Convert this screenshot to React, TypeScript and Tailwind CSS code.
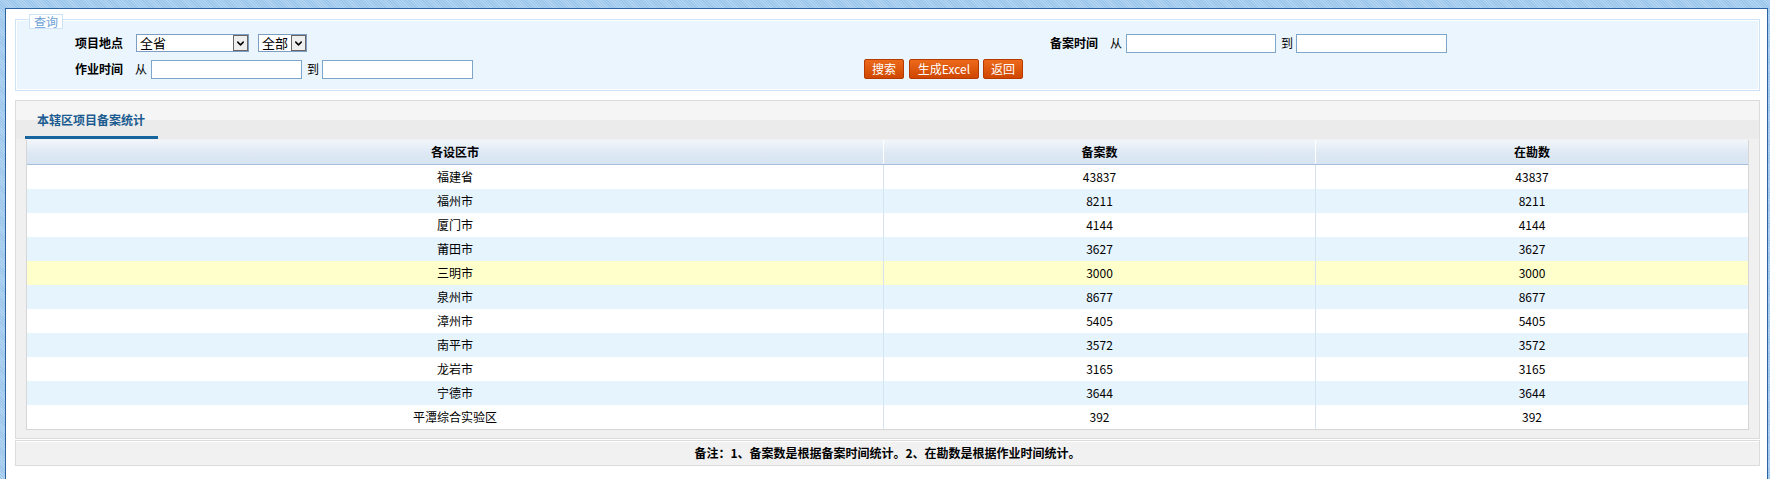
import React from 'react';
import { ChevronDown } from 'lucide-react';

const rows = [
  { city: '福建省', filed: 43837, active: 43837 },
  { city: '福州市', filed: 8211, active: 8211 },
  { city: '厦门市', filed: 4144, active: 4144 },
  { city: '莆田市', filed: 3627, active: 3627 },
  { city: '三明市', filed: 3000, active: 3000, hover: true },
  { city: '泉州市', filed: 8677, active: 8677 },
  { city: '漳州市', filed: 5405, active: 5405 },
  { city: '南平市', filed: 3572, active: 3572 },
  { city: '龙岩市', filed: 3165, active: 3165 },
  { city: '宁德市', filed: 3644, active: 3644 },
  { city: '平潭综合实验区', filed: 392, active: 392 },
];

const FakeSelect: React.FC<{ value: string; className: string }> = ({ value, className }) => (
  <div className={`flex h-[18px] border border-[#7d9ec2] bg-white ${className}`}>
    <span className="flex-1 pl-[3px] text-[13px] leading-[16px] text-black">{value}</span>
    <span className="w-[15px] h-full bg-[#eeeeee] border border-[#666] flex items-center justify-center">
      <ChevronDown size={11} strokeWidth={3.2} className="text-black" />
    </span>
  </div>
);

const TextBox: React.FC<{ className: string }> = ({ className }) => (
  <input type="text" className={`h-[19px] border border-[#7ea6ca] bg-white outline-none ${className}`} />
);

const OrangeButton: React.FC<{ label: string; className: string }> = ({ label, className }) => (
  <button className={`h-[20px] rounded-[2px] border border-[#b63a00] bg-[linear-gradient(to_bottom,#ec6a1c,#cf4600)] text-white text-[12px] leading-[18px] ${className}`}>
    {label}
  </button>
);

export default function App() {
  return (
    <div className="h-[479px] w-full flex flex-col pt-[8px] pl-[5px] pr-[2px] bg-[repeating-linear-gradient(45deg,#b0d3f1_0px,#b0d3f1_1px,#9cc6ea_1px,#9cc6ea_2px)] font-['Noto_Sans_CJK_SC',sans-serif] text-[12px] text-black overflow-hidden">
      <div className="flex-1 bg-white border-t border-l border-r border-[#2c63a0] flex flex-col">
        {/* 查询 */}
        <div className="relative mt-[10px] ml-[9px] mr-[7px] h-[72px] border border-[#cce3f8] bg-[#eaf5fe] shadow-[inset_0_0_0_1px_#ffffff]">
          <span className="absolute left-[13px] top-[-6px] h-[15px] px-[4px] bg-white border border-[#cce3f8] text-[#6b9fd4] leading-[13px]">
            查询
          </span>
          <div className="grid grid-cols-[117px_727px_250px_1fr] grid-rows-[26px_26px] pt-[10px]">
            <div className="flex items-center justify-end pr-[10px] font-bold">项目地点</div>
            <div className="flex items-center pl-[3px]">
              <FakeSelect value="全省" className="w-[113px]" />
              <FakeSelect value="全部" className="w-[49px] ml-[9px]" />
            </div>
            <div className="flex items-center justify-end pr-[12px] font-bold">备案时间</div>
            <div className="flex items-center">
              <span>从</span>
              <TextBox className="w-[150px] ml-[4px]" />
              <span className="ml-[5px]">到</span>
              <TextBox className="w-[151px] ml-[3px]" />
            </div>

            <div className="flex items-center justify-end pr-[10px] font-bold">作业时间</div>
            <div className="flex items-center pl-[2px]">
              <span>从</span>
              <TextBox className="w-[151px] ml-[4px]" />
              <span className="ml-[5px]">到</span>
              <TextBox className="w-[151px] ml-[3px]" />
            </div>
            <div className="flex items-center pl-[4px]">
              <OrangeButton label="搜索" className="w-[40px]" />
              <OrangeButton label="生成Excel" className="w-[70px] ml-[5px]" />
              <OrangeButton label="返回" className="w-[40px] ml-[4px]" />
            </div>
            <div />
          </div>
        </div>

        {/* 统计表 */}
        <div className="mt-[9px] ml-[9px] mr-[7px] border border-[#dcdcdc] bg-[#f0f0f0]">
          <div className="h-[38px] bg-[linear-gradient(to_bottom,#f5f5f5_50%,#ebebeb_50%)] flex">
            <div className="ml-[9px] w-[133px] h-full border-b-[3px] border-[#17659f] pl-[12px] pt-[2px] flex items-center font-bold text-[#1b5b90]">
              本辖区项目备案统计
            </div>
          </div>
          <div className="mx-[10px] mt-[1px] mb-[8px] border-l border-r border-b border-[#d6d6d6] bg-white">
            <div className="grid grid-cols-[856px_432px_1fr] h-[25px] border-b border-[#a3bfdc] bg-[linear-gradient(to_bottom,#f2f6fb,#dfe9f5_50%,#d8e4f2)] font-bold">
              <div className="flex items-center justify-center">各设区市</div>
              <div className="flex items-center justify-center border-l border-white">备案数</div>
              <div className="flex items-center justify-center border-l border-white">在勘数</div>
            </div>
            {rows.map((r, i) => (
              <div
                key={r.city}
                className={`grid grid-cols-[856px_432px_1fr] h-[24px] ${r.hover ? 'bg-[#ffffcc]' : i % 2 === 1 ? 'bg-[#e6f4fe]' : 'bg-white'}`}
              >
                <div className="flex items-center justify-center">{r.city}</div>
                <div className="flex items-center justify-center border-l border-[#d6e4f1]">{r.filed}</div>
                <div className="flex items-center justify-center border-l border-[#d6e4f1]">{r.active}</div>
              </div>
            ))}
          </div>
        </div>

        <div className="mt-[1px] ml-[9px] mr-[7px] h-[26px] border border-[#dcdcdc] bg-[#f1f1f1] shadow-[inset_0_1px_0_#ffffff] flex items-center justify-center font-bold">
          备注：1、备案数是根据备案时间统计。2、在勘数是根据作业时间统计。
        </div>
      </div>
    </div>
  );
}
